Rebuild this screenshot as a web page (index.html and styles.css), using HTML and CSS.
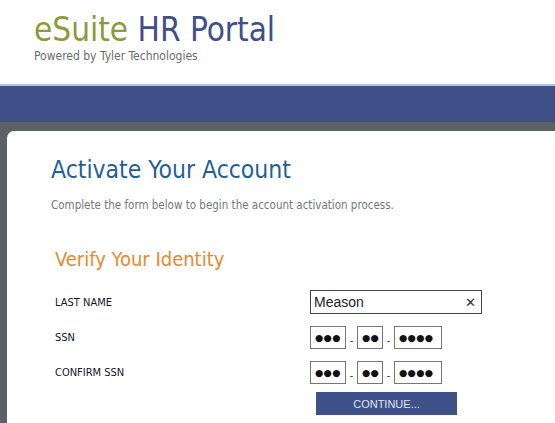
FILE: index.html
```html
<!DOCTYPE html>
<html lang="en">
<head>
    <meta charset="UTF-8">
    <title>eSuite HR Portal - Activate Your Account</title>
    <link rel="stylesheet" href="styles.css">
</head>
<body>
    <header class="site-header">
        <div class="brand"><span class="brand-e">eSuite</span> <span class="brand-hr">HR Portal</span></div>
        <div class="powered">Powered by Tyler Technologies</div>
    </header>
    <nav class="nav-bar"></nav>

    <main class="page">
        <div class="card">
            <h1>Activate Your Account</h1>
            <p class="intro">Complete the form below to begin the account activation process.</p>

            <h2>Verify Your Identity</h2>
            <form class="form" id="activateForm">
                <label class="label">LAST NAME</label>
                <div class="field">
                    <div class="text-box">Meason<span class="clear">&#x2715;</span></div>
                </div>

                <label class="label">SSN</label>
                <div class="field">
                    <div class="ssn ssn-3">&#9679;&#9679;&#9679;</div><span class="dash">-</span>
                    <div class="ssn ssn-2">&#9679;&#9679;</div><span class="dash">-</span>
                    <div class="ssn ssn-4">&#9679;&#9679;&#9679;&#9679;</div>
                </div>

                <label class="label">CONFIRM SSN</label>
                <div class="field">
                    <div class="ssn ssn-3">&#9679;&#9679;&#9679;</div><span class="dash">-</span>
                    <div class="ssn ssn-2">&#9679;&#9679;</div><span class="dash">-</span>
                    <div class="ssn ssn-4">&#9679;&#9679;&#9679;&#9679;</div>
                </div>

                <div></div>
                <div class="field">
                    <button type="submit" class="btn">CONTINUE...</button>
                </div>
            </form>
        </div>
    </main>
</body>
</html>
```

FILE: styles.css
```css
body {
    margin: 0;
    font-family: "DejaVu Sans Condensed", "DejaVu Sans", sans-serif;
    background-color: #fff;
    height: 423px;
    overflow: hidden;
}
.site-header {
    height: 86px;
    padding-left: 34px;
    box-sizing: border-box;
    padding-top: 10px;
    border-bottom: 2px solid #a9c6e3;
}
.brand {
    font-size: 33px;
    line-height: 39px;
}
.brand-e {
    color: #8d9a3c;
}
.brand-hr {
    color: #3f4f8a;
}
.powered {
    font-size: 12px;
    color: #6b6b6b;
}
.nav-bar {
    height: 36px;
    background-color: #3f5089;
}
.page {
    background-color: #5c6166;
    padding: 9px 0 0 7px;
    height: 301px;
    box-sizing: border-box;
}
.card {
    background: #fff;
    border-top-left-radius: 7px;
    height: 100%;
    padding: 23px 0 0 44px;
    box-sizing: border-box;
}
h1 {
    margin: 0;
    font-size: 24.5px;
    font-weight: normal;
    color: #1f5f9c;
    line-height: 32px;
}
.intro {
    margin: 12px 0 0;
    font-size: 11.5px;
    color: #777;
}
h2 {
    margin: 35px 0 0 4px;
    font-size: 20px;
    font-weight: normal;
    color: #e8892c;
    line-height: 24px;
}
.form {
    display: grid;
    grid-template-columns: 255px auto;
    row-gap: 12px;
    margin: 19px 0 0 4px;
    align-items: center;
}
.label {
    font-size: 11px;
    color: #15152a;
}
.field {
    display: flex;
    align-items: center;
}
.text-box {
    width: 172px;
    height: 24px;
    box-sizing: border-box;
    border: 1px solid #444;
    font-family: "Liberation Sans", sans-serif;
    font-size: 14px;
    color: #222;
    padding: 0 5px 0 3px;
    display: flex;
    align-items: center;
    justify-content: space-between;
}
.clear {
    font-family: "DejaVu Sans", sans-serif;
    font-size: 13px;
    font-weight: bold;
    color: #333;
}
.ssn {
    height: 23px;
    box-sizing: border-box;
    border: 1px solid #777;
    font-family: "DejaVu Sans", sans-serif;
    font-size: 9.5px;
    letter-spacing: 0.3px;
    color: #111;
    display: flex;
    align-items: center;
    padding-left: 4px;
}
.ssn-3 {
    width: 36px;
}
.ssn-2 {
    width: 26px;
}
.ssn-4 {
    width: 48px;
}
.dash {
    width: 11px;
    text-align: center;
    font-size: 11px;
    color: #333;
    padding-top: 6px;
}
.btn {
    margin: -4px 0 0 6px;
    width: 141px;
    height: 23px;
    background-color: #3f5089;
    color: #dfe6f2;
    border: none;
    font-family: "Liberation Sans", sans-serif;
    font-size: 11px;
    cursor: pointer;
}
```
